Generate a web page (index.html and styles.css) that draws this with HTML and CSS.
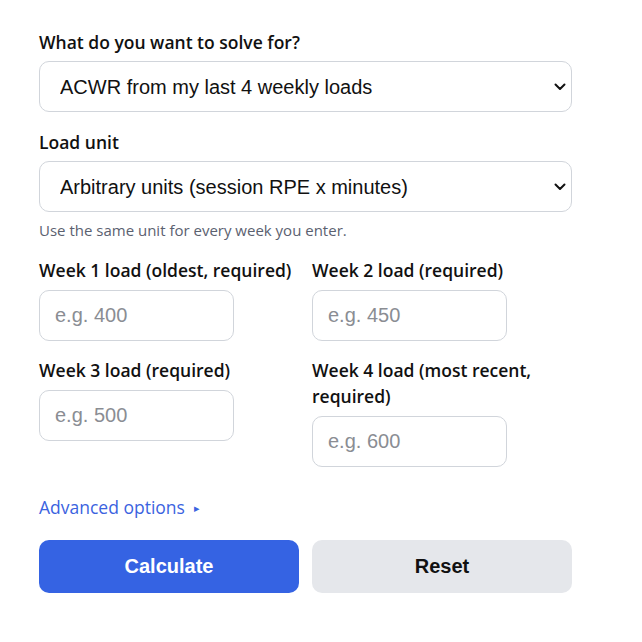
FILE: index.html
```html
<!DOCTYPE html>
<html lang="en">
<head>
<meta charset="utf-8">
<title>ACWR calculator</title>
<link rel="stylesheet" href="styles.css">
</head>
<body>
<form class="calc">
  <div class="field">
    <label class="label" for="solve">What do you want to solve for?</label>
    <div class="select-wrap">
      <select id="solve" class="select">
        <option>ACWR from my last 4 weekly loads</option>
      </select>
      <svg class="chev" viewBox="0 0 12 8" width="12" height="8"><path d="M1.5 1.5 6 6l4.5-4.5" fill="none" stroke="#111" stroke-width="2" stroke-linecap="round" stroke-linejoin="round"/></svg>
    </div>
  </div>

  <div class="field">
    <label class="label" for="unit">Load unit</label>
    <div class="select-wrap">
      <select id="unit" class="select">
        <option>Arbitrary units (session RPE x minutes)</option>
      </select>
      <svg class="chev" viewBox="0 0 12 8" width="12" height="8"><path d="M1.5 1.5 6 6l4.5-4.5" fill="none" stroke="#111" stroke-width="2" stroke-linecap="round" stroke-linejoin="round"/></svg>
    </div>
    <p class="hint">Use the same unit for every week you enter.</p>
  </div>

  <div class="grid">
    <div class="cell">
      <label class="label" for="w1">Week 1 load (oldest, required)</label>
      <input id="w1" class="input" type="text" placeholder="e.g. 400">
    </div>
    <div class="cell">
      <label class="label" for="w2">Week 2 load (required)</label>
      <input id="w2" class="input" type="text" placeholder="e.g. 450">
    </div>
    <div class="cell">
      <label class="label" for="w3">Week 3 load (required)</label>
      <input id="w3" class="input" type="text" placeholder="e.g. 500">
    </div>
    <div class="cell">
      <label class="label" for="w4">Week 4 load (most recent, required)</label>
      <input id="w4" class="input" type="text" placeholder="e.g. 600">
    </div>
  </div>

  <div class="advanced">Advanced options <span class="tri">&#9656;</span></div>

  <div class="actions">
    <button type="button" class="btn btn-primary">Calculate</button>
    <button type="button" class="btn btn-secondary">Reset</button>
  </div>
</form>
</body>
</html>
```

FILE: styles.css
```css
* { box-sizing: border-box; }

html, body {
  margin: 0;
  background: #fff;
}

body {
  font-family: "Open Sans", "Noto Sans", sans-serif;
  color: #111827;
}

.calc {
  width: 533px;
  margin: 29px 0 0 39px;
}

.field {
  margin-bottom: 17px;
}

.label {
  display: block;
  font-size: 17.5px;
  font-weight: 600;
  line-height: 26px;
  margin-bottom: 6px;
  color: #111;
}

.select-wrap {
  position: relative;
}

.select {
  appearance: none;
  -webkit-appearance: none;
  display: block;
  width: 100%;
  height: 51px;
  padding: 0 40px 0 20px;
  font-family: "Liberation Sans", Arial, sans-serif;
  font-size: 20px;
  color: #111;
  background: #fff;
  border: 1px solid #d1d5db;
  border-radius: 10px;
}

.chev {
  position: absolute;
  right: 6px;
  top: 22px;
  pointer-events: none;
}

.hint {
  margin: 8px 0 0;
  font-size: 15px;
  line-height: 20px;
  color: #5b6170;
}

.grid {
  display: grid;
  grid-template-columns: 260px 260px;
  column-gap: 13px;
  row-gap: 16px;
  margin-top: 3px;
}

.cell .label {
  margin-bottom: 7px;
}

.input {
  display: block;
  width: 195px;
  height: 51px;
  padding: 0 15px;
  font-family: "Liberation Sans", Arial, sans-serif;
  font-size: 20px;
  color: #111;
  border: 1px solid #d1d5db;
  border-radius: 10px;
  background: #fff;
}

.input::placeholder {
  color: #8a8d93;
}

.advanced {
  margin-top: 27px;
  font-size: 17.5px;
  line-height: 26px;
  color: #3b63e0;
}

.tri {
  font-size: 11px;
  margin-left: 5px;
  vertical-align: 2px;
}

.actions {
  display: grid;
  grid-template-columns: 260px 260px;
  column-gap: 13px;
  margin-top: 19px;
}

.btn {
  height: 53px;
  border: none;
  border-radius: 10px;
  font-family: "Liberation Sans", Arial, sans-serif;
  font-size: 20px;
  font-weight: 700;
  cursor: pointer;
}

.btn-primary {
  background: #3563e3;
  color: #fff;
}

.btn-secondary {
  background: #e5e7eb;
  color: #111;
}
```
